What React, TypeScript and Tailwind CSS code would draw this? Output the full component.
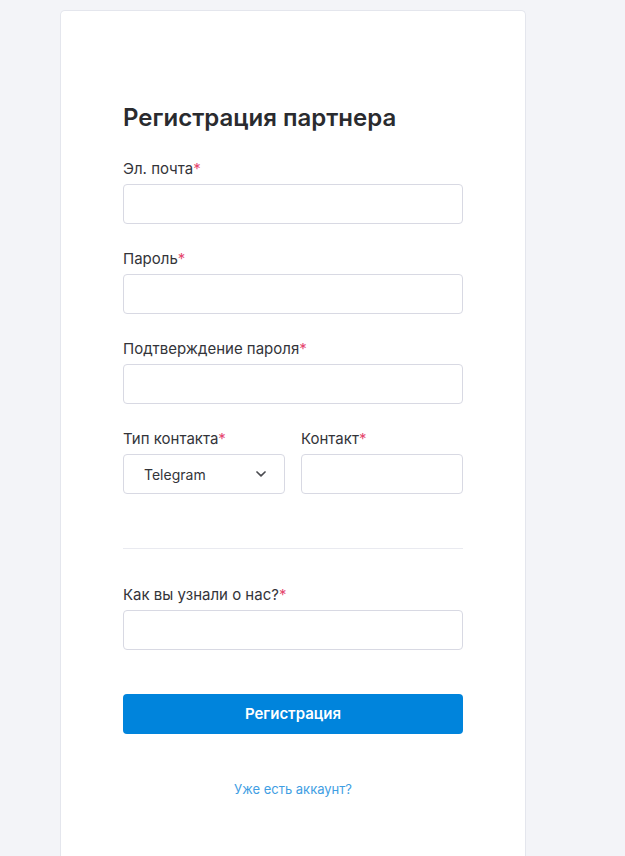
function Label({ text }: { text: string }) {
  return (
    <label className="mb-1 block text-[15px] leading-[22px] text-[#333439]">
      {text}
      <span className="text-[#e5486f]">*</span>
    </label>
  );
}

function Field({ label }: { label: string }) {
  return (
    <div>
      <Label text={label} />
      <input className="h-10 w-full rounded-[4px] border border-[#d8d9e3] bg-white px-3 text-[14px] outline-none" />
    </div>
  );
}

export default function App() {
  return (
    <div className="min-h-[856px] bg-[#f3f4f8] pt-[10px] font-['Inter',sans-serif]">
      <div className="ml-[60px] min-h-[846px] w-[466px] rounded-t-[5px] border border-b-0 border-[#e4e6ed] bg-white px-[62px] pt-[91px]">
        <h1 className="mb-6 text-[24px] leading-8 font-semibold text-[#2a2b2f]">
          Регистрация партнера
        </h1>
        <div className="flex flex-col gap-6">
          <Field label="Эл. почта" />
          <Field label="Пароль" />
          <Field label="Подтверждение пароля" />
          <div className="grid grid-cols-2 gap-4">
            <div>
              <Label text="Тип контакта" />
              <div className="flex h-10 items-center justify-between rounded-[4px] border border-[#d8d9e3] pr-[18px] pl-[20px] text-[14px] text-[#333439]">
                <span>Telegram</span>
                <svg width="10" height="6" viewBox="0 0 10 6" fill="none">
                  <path d="M1 1l4 3.8L9 1" stroke="#4a4b50" strokeWidth="1.7" strokeLinecap="round" strokeLinejoin="round" />
                </svg>
              </div>
            </div>
            <Field label="Контакт" />
          </div>
        </div>
        <div className="mt-[54px] mb-[35px] h-px bg-[#e9eaf0]" />
        <Field label="Как вы узнали о нас?" />
        <button className="mt-[44px] h-10 w-full rounded-[4px] bg-[#0084dc] text-[15px] font-semibold text-white">
          Регистрация
        </button>
        <div className="mt-[42px] text-center">
          <a className="text-[13px] text-[#3f9ee3]">Уже есть аккаунт?</a>
        </div>
      </div>
    </div>
  );
}
